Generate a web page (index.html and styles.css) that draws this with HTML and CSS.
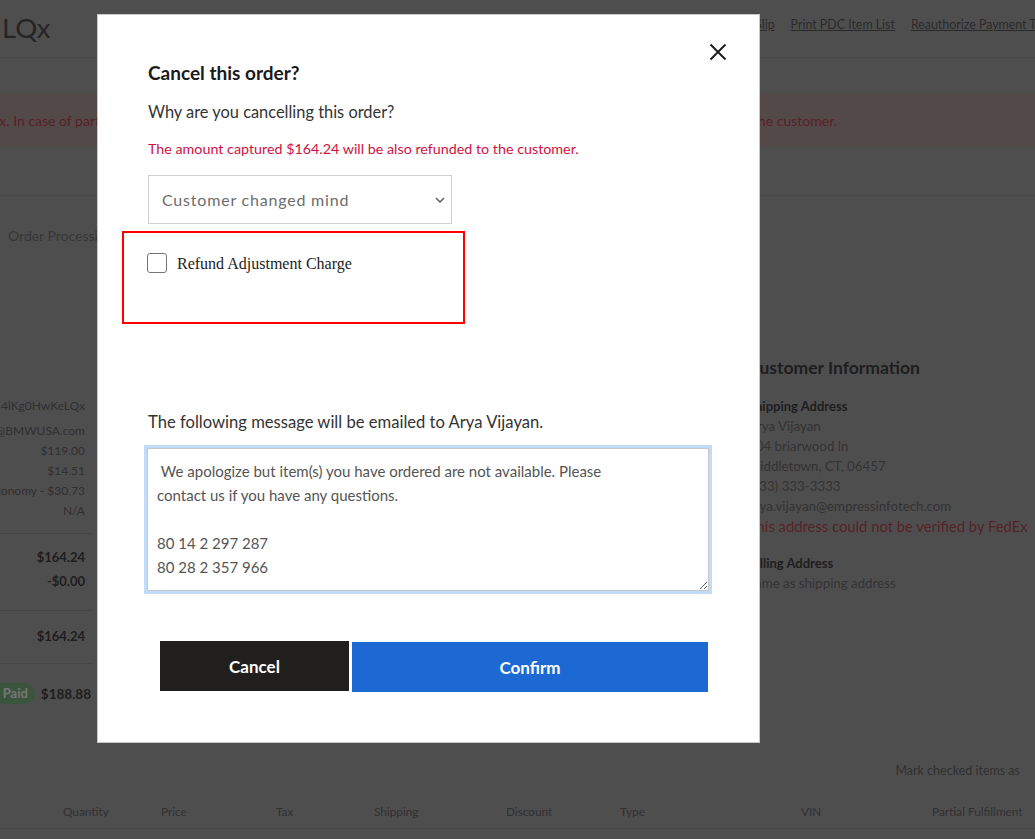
FILE: index.html
```html
<!DOCTYPE html>
<html lang="en">
<head>
<meta charset="utf-8">
<title>Cancel order</title>
<link rel="stylesheet" href="styles.css">
</head>
<body>
<div class="page">
  <header class="top">
    <h1 class="order-title">LQx</h1>
    <nav class="actions">
      <a href="#">Packing Slip</a>
      <a href="#">Print PDC Item List</a>
      <a href="#">Reauthorize Payment Token</a>
    </nav>
  </header>

  <div class="alert">
    <p>Cancelling will void the authorization for 4lKg0HwKeLQx. In case of partial capture, the remaining authorized amount will be released and the captured amount will be refunded to the customer.</p>
  </div>

  <div class="tabs">
    <span class="tab">Order Processing</span>
  </div>

  <section class="summary">
    <div class="totals">
      <div class="group details">
        <div class="val first">4lKg0HwKeLQx</div>
        <div class="val">orders@BMWUSA.com</div>
        <div class="val">$119.00</div>
        <div class="val">$14.51</div>
        <div class="val">FedEx Economy - $30.73</div>
        <div class="val">N/A</div>
      </div>
      <div class="group sums">
        <div class="val strong">$164.24</div>
        <div class="val strong">-$0.00</div>
      </div>
      <div class="group sums second">
        <div class="val strong">$164.24</div>
      </div>
      <div class="group paid-row">
        <span class="badge">Paid</span>
        <span class="paid-amt">$188.88</span>
      </div>
    </div>
    <div class="middle"></div>
    <div class="customer">
      <h2>Customer Information</h2>
      <h3>Shipping Address</h3>
      <div class="line">Arya Vijayan</div>
      <div class="line">104 briarwood ln</div>
      <div class="line">Middletown, CT, 06457</div>
      <div class="line">(333) 333-3333</div>
      <div class="line">arya.vijayan@empressinfotech.com</div>
      <div class="warn">This address could not be verified by FedEx</div>
      <h3 class="billing">Billing Address</h3>
      <div class="line">Same as shipping address</div>
    </div>
  </section>

  <div class="mark">Mark checked items as</div>

  <div class="thead">
    <span></span>
    <span>Quantity</span>
    <span>Price</span>
    <span>Tax</span>
    <span>Shipping</span>
    <span>Discount</span>
    <span>Type</span>
    <span>VIN</span>
    <span>Partial Fulfillment</span>
  </div>
</div>

<div class="backdrop">
  <div class="modal" role="dialog" aria-labelledby="modal-title">
    <button class="close" aria-label="Close">
      <svg width="18" height="18" viewBox="0 0 18 18"><path d="M1.5 1.5 L16.5 16.5 M16.5 1.5 L1.5 16.5" stroke="#1e1e1e" stroke-width="2" fill="none"/></svg>
    </button>
    <h2 class="modal-title" id="modal-title">Cancel this order?</h2>
    <p class="question">Why are you cancelling this order?</p>
    <p class="refund-note">The amount captured $164.24 will be also refunded to the customer.</p>
    <div class="select-wrap">
      <select class="reason">
        <option>Customer changed mind</option>
      </select>
      <svg class="chev" width="10" height="6" viewBox="0 0 10 6"><path d="M1 1 L5 5 L9 1" stroke="#666" stroke-width="1.6" fill="none"/></svg>
    </div>
    <div class="highlight">
      <label class="check-row">
        <input type="checkbox" class="check">
        <span class="check-label">Refund Adjustment Charge</span>
      </label>
    </div>
    <p class="email-note">The following message will be emailed to Arya Vijayan.</p>
    <textarea class="message"> We apologize but item(s) you have ordered are not available. Please
contact us if you have any questions.

80 14 2 297 287
80 28 2 357 966</textarea>
    <div class="buttons">
      <button class="btn btn-cancel">Cancel</button>
      <button class="btn btn-confirm">Confirm</button>
    </div>
  </div>
</div>
</body>
</html>
```

FILE: styles.css
```css
* { box-sizing: border-box; }

html, body {
  margin: 0;
  padding: 0;
}

body {
  font-family: Lato, "Open Sans", Arial, sans-serif;
  background: #9f9d9e;
  color: #5a5a5a;
  width: 1035px;
  height: 839px;
  overflow: hidden;
}

.page {
  width: 1035px;
  overflow: hidden;
}

/* header */
.top {
  display: grid;
  grid-template-columns: 710px 1fr;
  height: 58px;
  border-bottom: 1px solid #969494;
}
.order-title {
  margin: 0;
  padding: 13px 0 0 2px;
  font-size: 27.5px;
  line-height: 30px;
  font-weight: 400;
  color: #4a4a4a;
}
.actions {
  display: flex;
  gap: 16px;
  padding-top: 17px;
  white-space: nowrap;
}
.actions a {
  font-size: 12.4px;
  line-height: 16px;
  color: #555;
  text-decoration: underline;
}

/* alert */
.alert {
  margin-top: 35px;
  height: 55px;
  background: #a69292;
  border-bottom: 1px solid #999;
  display: flex;
  justify-content: flex-end;
  align-items: center;
  padding-right: 198px;
  white-space: nowrap;
}
.alert p {
  margin: 0;
  font-size: 14px;
  color: #b0424d;
}

/* tabs */
.tabs {
  margin-top: 47px;
  border-top: 1px solid #979595;
  height: 135px;
  padding: 29px 0 0 8px;
}
.tab {
  font-size: 14px;
  line-height: 20px;
  color: #6e6e6e;
}

/* summary */
.summary {
  display: grid;
  grid-template-columns: 208px 655px 1fr;
  margin-left: -115px;
  height: 375px;
}
.totals {
  display: flex;
  flex-direction: column;
}
.group {
  border-bottom: 1px solid #8e8c8c;
  padding-right: 8px;
}
.group:last-child { border-bottom: none; }
.details { padding-top: 66px; padding-bottom: 12px; }
.val {
  text-align: right;
  font-size: 12px;
  line-height: 20px;
  white-space: nowrap;
  color: #606060;
}
.details .val.first { margin-bottom: 5px; }
.sums { padding-top: 11px; padding-bottom: 17px; }
.sums.second { padding-top: 13px; padding-bottom: 15px; }
.val.strong {
  font-size: 13px;
  line-height: 24px;
  font-weight: 700;
  color: #3c3c3c;
}
.paid-row {
  display: flex;
  justify-content: flex-end;
  align-items: center;
  gap: 6px;
  padding-top: 19px;
  padding-right: 2px;
}
.badge {
  background: #74a87a;
  color: #e8eee8;
  font-size: 13px;
  font-weight: 700;
  padding: 2px 7px 2px 10px;
  border-radius: 11px;
  line-height: 17px;
}
.paid-amt {
  font-size: 13.5px;
  font-weight: 700;
  color: #3c3c3c;
}

.customer {
  padding-top: 27px;
  white-space: nowrap;
}
.customer h2 {
  margin: 0;
  font-size: 17.5px;
  line-height: 22px;
  font-weight: 700;
  color: #3c3c3c;
}
.customer h3 {
  margin: 17px 0 0;
  font-size: 13px;
  line-height: 20px;
  font-weight: 700;
  color: #3c3c3c;
}
.customer h3.billing { margin-top: 17px; }
.customer .line {
  font-size: 13.3px;
  line-height: 20px;
  color: #666;
}
.customer .warn {
  font-size: 14.8px;
  line-height: 20px;
  color: #ac4450;
}

.mark {
  text-align: right;
  padding-right: 15px;
  font-size: 12.5px;
  line-height: 18px;
  color: #626262;
  margin-top: 57px;
}

.thead {
  display: grid;
  grid-template-columns: 63px 98px 115px 98px 132px 114px 181px 131px 1fr;
  margin-top: 23px;
  padding-bottom: 7px;
  border-bottom: 1px solid #8e8c8c;
  font-size: 11.8px;
  line-height: 18px;
  color: #626262;
  white-space: nowrap;
}

/* backdrop and modal */
.backdrop {
  position: fixed;
  inset: 0;
  background: rgba(0, 0, 0, 0.5);
}

.modal {
  position: relative;
  margin: 14px 0 0 97px;
  width: 663px;
  background: #fff;
  border: 1px solid #c8c8c8;
  padding: 46px 48px 50px 50px;
  color: #333;
}

.close {
  position: absolute;
  top: 27px;
  right: 31px;
  width: 20px;
  height: 20px;
  padding: 1px;
  border: none;
  background: none;
  cursor: pointer;
}
.close svg { display: block; }

.modal-title {
  margin: 0;
  font-size: 19px;
  line-height: 24px;
  font-weight: 700;
  color: #1a1a1a;
}
.question {
  margin: 15px 0 0;
  font-size: 16.4px;
  line-height: 24px;
  color: #333;
}
.refund-note {
  margin: 15px 0 0;
  font-size: 14.3px;
  line-height: 20px;
  color: #d1123f;
}

.select-wrap {
  position: relative;
  margin-top: 16px;
  width: 304px;
}
.reason {
  display: block;
  width: 304px;
  height: 49px;
  appearance: none;
  -webkit-appearance: none;
  background: #fff;
  border: 1px solid #d0d0d0;
  border-radius: 0;
  padding: 0 0 0 13px;
  font-family: Lato, "Open Sans", Arial, sans-serif;
  font-size: 16px;
  letter-spacing: 0.8px;
  color: #6d6d6d;
}
.chev {
  position: absolute;
  right: 7px;
  top: 22px;
}

.highlight {
  margin: 7px 0 0 -26px;
  width: 343px;
  height: 93px;
  border: 2px solid #f00;
  padding: 21px 0 0 23px;
}
.check-row {
  display: flex;
  align-items: center;
  gap: 10px;
}
.check {
  appearance: none;
  -webkit-appearance: none;
  margin: -1px 0 0;
  width: 20px;
  height: 20px;
  border: 1px solid #767676;
  border-radius: 3px;
  background: #fff;
}
.check-label {
  font-family: "Liberation Serif", "Times New Roman", serif;
  font-size: 16px;
  color: #222;
}

.email-note {
  margin: 86px 0 0;
  font-size: 16.6px;
  line-height: 24px;
  color: #333;
}

.message {
  display: block;
  margin: 14px 0 0 -1px;
  width: 562px;
  height: 143px;
  border: 1px solid #c8c8c8;
  box-shadow: 0 0 0 3px #c1dcf8;
  outline: none;
  padding: 10px 8px 0 9px;
  font-family: Lato, "Open Sans", Arial, sans-serif;
  font-size: 15px;
  line-height: 24px;
  color: #555;
  resize: both;
}

.buttons {
  display: flex;
  gap: 3px;
  margin: 50px 0 0 12px;
  align-items: flex-start;
}
.btn {
  height: 50px;
  border: none;
  border-radius: 0;
  font-family: Lato, "Open Sans", Arial, sans-serif;
  font-size: 17px;
  font-weight: 700;
  color: #fff;
  cursor: pointer;
}
.btn-cancel {
  width: 189px;
  background: #211f1e;
}
.btn-confirm {
  width: 356px;
  margin-top: 1px;
  background: #1c69d4;
}
```
